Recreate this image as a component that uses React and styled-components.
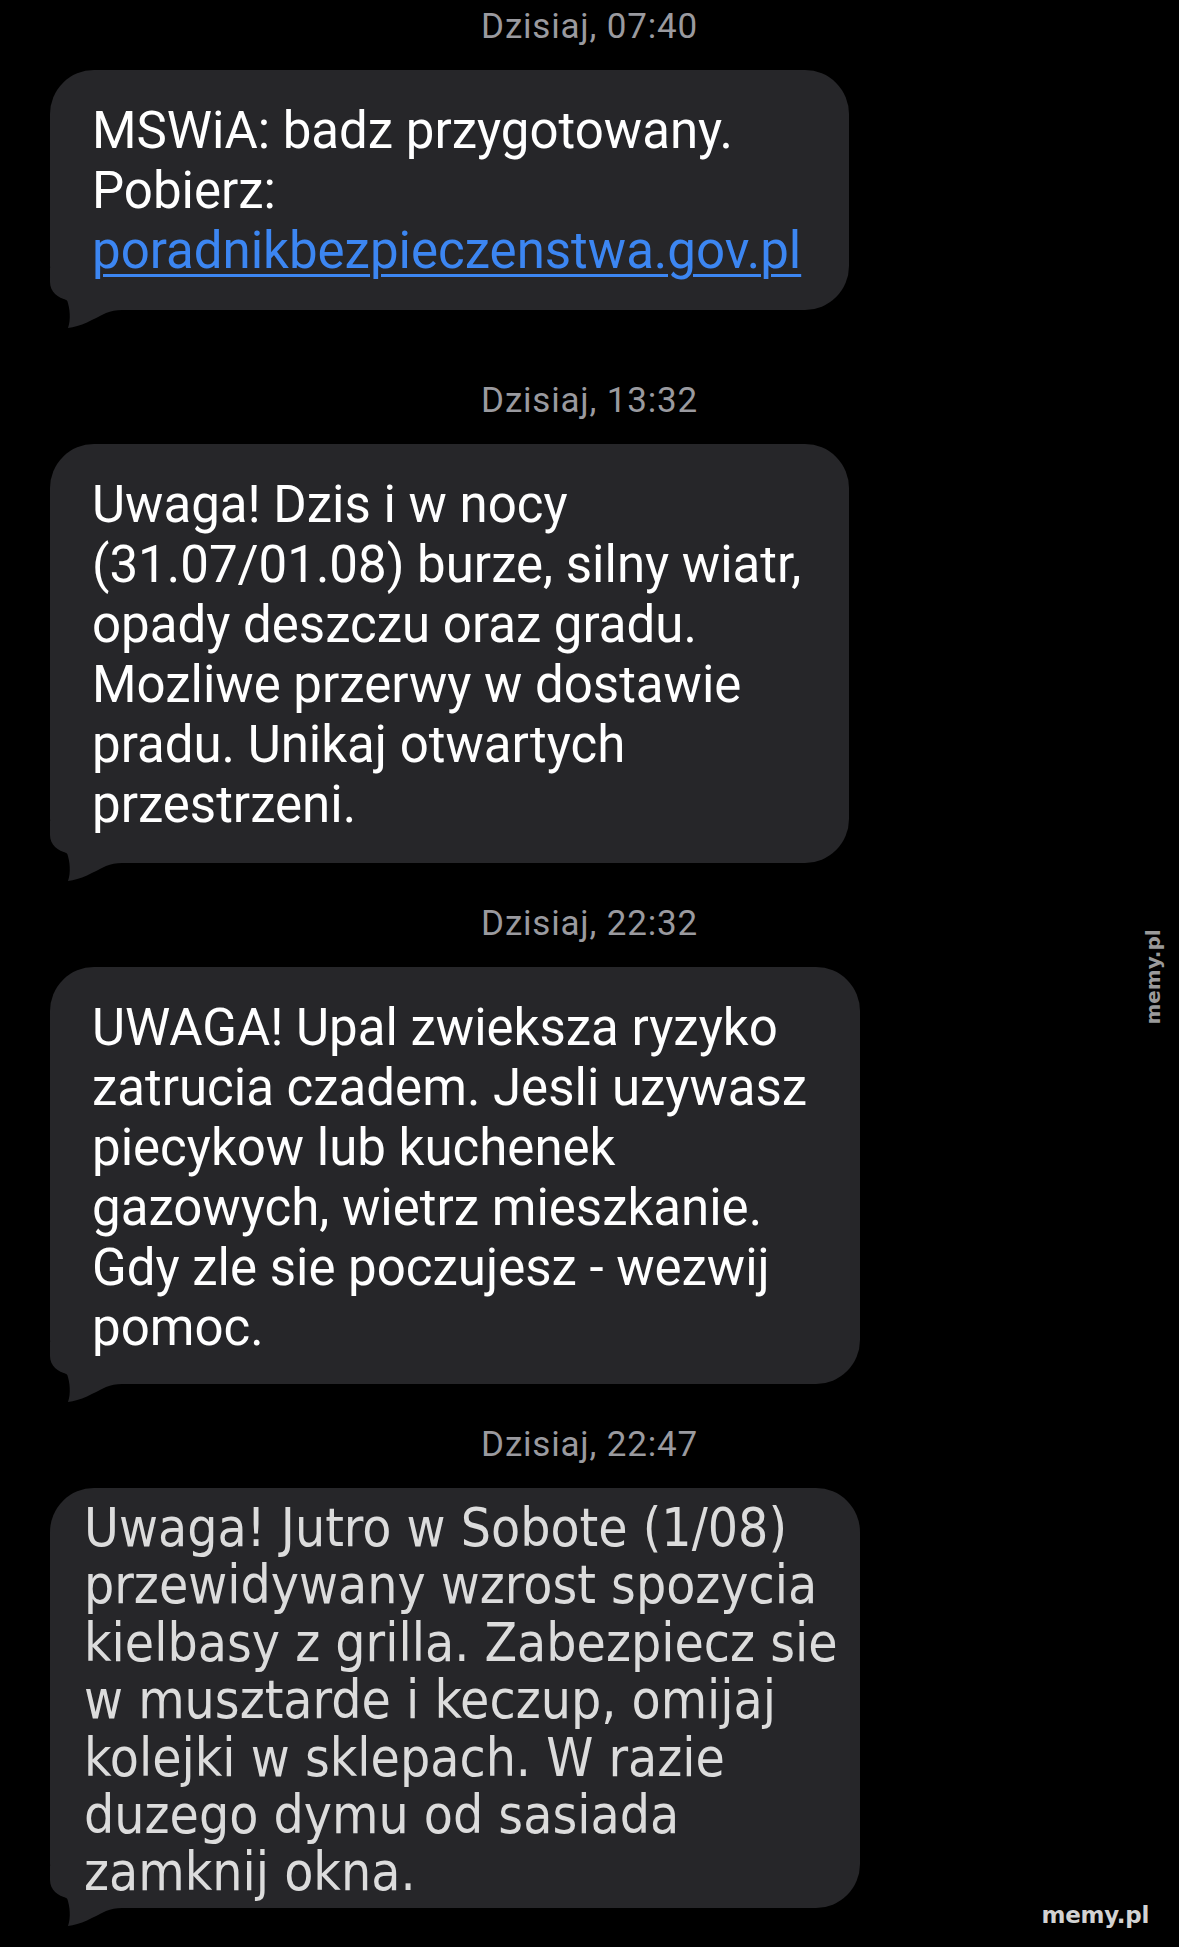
import React from "react";
import styled, { createGlobalStyle } from "styled-components";

const Global = createGlobalStyle`
  html, body { margin: 0; padding: 0; background: #000; }
  #root { background: #000; }
`;

const Page = styled.main`
  position: relative;
  box-sizing: border-box;
  width: 1179px;
  min-height: 1947px;
  padding-top: 7px;
  background: #000;
  display: flex;
  flex-direction: column;
  overflow: hidden;
`;

const Group = styled.section`
  display: flex;
  flex-direction: column;
  align-items: flex-start;
  gap: 23px;
  margin-top: ${(p) => p.$gap}px;
`;

const Stamp = styled.div`
  align-self: stretch;
  text-align: center;
  font-family: Roboto, "Liberation Sans", sans-serif;
  font-weight: 400;
  font-size: 35px;
  line-height: 40px;
  letter-spacing: 0.8px;
  color: #9a9a9f;
`;

const Bubble = styled.div`
  position: relative;
  box-sizing: border-box;
  margin-left: 50px;
  width: ${(p) => p.$w}px;
  padding: ${(p) => p.$pad};
  background: #262629;
  border-radius: 44px;
  color: #ffffff;
  font-family: Roboto, "Liberation Sans", sans-serif;
  font-size: 51px;
  line-height: 60px;
`;

const AltBubble = styled(Bubble)`
  color: #dcdcdc;
  font-family: "DejaVu Sans Condensed", "DejaVu Sans", sans-serif;
  font-stretch: condensed;
  font-size: 53px;
  line-height: 57.4px;
`;

const Line = styled.span`
  position: relative;
  z-index: 1;
  display: block;
  white-space: nowrap;
`;

const Link = styled.span`
  color: #3c86f2;
  text-decoration: underline;
  text-decoration-thickness: 3px;
  text-underline-offset: 6px;
`;

const TailSvg = styled.svg`
  position: absolute;
  left: 0;
  bottom: -18px;
  width: 72px;
  height: 60px;
  display: block;
`;

const SideMark = styled.span`
  position: absolute;
  left: 1153px;
  top: 977px;
  transform: translate(-50%, -50%) rotate(-90deg);
  font-family: "DejaVu Sans", sans-serif;
  font-weight: 700;
  font-size: 20px;
  line-height: 1;
  color: #9a9a9a;
  white-space: nowrap;
`;

const CornerMark = styled.span`
  position: absolute;
  right: 30px;
  bottom: 20px;
  font-family: "DejaVu Sans", sans-serif;
  font-weight: 700;
  font-size: 23px;
  line-height: 1;
  letter-spacing: -0.3px;
  color: #d2d2d2;
  white-space: nowrap;
`;

const Tail = () => (
  <TailSvg viewBox="0 0 72 60" aria-hidden="true">
    <path
      d="M0 0 L0 14 C0 24 8 30 17 32 C20 40 21 52 18 60 C30 59 44 51 56 45 C61 43 66 42 72 42 L72 0 Z"
      fill="#262629"
    />
  </TailSvg>
);

const messages = [
  {
    time: "Dzisiaj, 07:40",
    gap: 0,
    w: 799,
    pad: "31px 30px 29px 42px",
    lines: ["MSWiA: badz przygotowany.", "Pobierz:"],
    link: "poradnikbezpieczenstwa.gov.pl",
  },
  {
    time: "Dzisiaj, 13:32",
    gap: 71,
    w: 799,
    pad: "31px 30px 28px 42px",
    lines: [
      "Uwaga! Dzis i w nocy",
      "(31.07/01.08) burze, silny wiatr,",
      "opady deszczu oraz gradu.",
      "Mozliwe przerwy w dostawie",
      "pradu. Unikaj otwartych",
      "przestrzeni.",
    ],
  },
  {
    time: "Dzisiaj, 22:32",
    gap: 41,
    w: 810,
    pad: "31px 30px 26px 42px",
    lines: [
      "UWAGA! Upal zwieksza ryzyko",
      "zatrucia czadem. Jesli uzywasz",
      "piecykow lub kuchenek",
      "gazowych, wietrz mieszkanie.",
      "Gdy zle sie poczujesz - wezwij",
      "pomoc.",
    ],
  },
  {
    time: "Dzisiaj, 22:47",
    gap: 41,
    w: 810,
    pad: "11px 20px 7px 34px",
    alt: true,
    lines: [
      "Uwaga! Jutro w Sobote (1/08)",
      "przewidywany wzrost spozycia",
      "kielbasy z grilla. Zabezpiecz sie",
      "w musztarde i keczup, omijaj",
      "kolejki w sklepach. W razie",
      "duzego dymu od sasiada",
      "zamknij okna.",
    ],
  },
];

export default function App() {
  return (
    <>
      <Global />
      <Page>
        {messages.map((m) => {
          const B = m.alt ? AltBubble : Bubble;
          return (
            <Group key={m.time} $gap={m.gap}>
              <Stamp>{m.time}</Stamp>
              <B $w={m.w} $pad={m.pad}>
                {m.lines.map((l) => (
                  <Line key={l}>{l}</Line>
                ))}
                {m.link && (
                  <Line>
                    <Link>{m.link}</Link>
                  </Line>
                )}
                <Tail />
              </B>
            </Group>
          );
        })}
        <SideMark>memy.pl</SideMark>
        <CornerMark>memy.pl</CornerMark>
      </Page>
    </>
  );
}
